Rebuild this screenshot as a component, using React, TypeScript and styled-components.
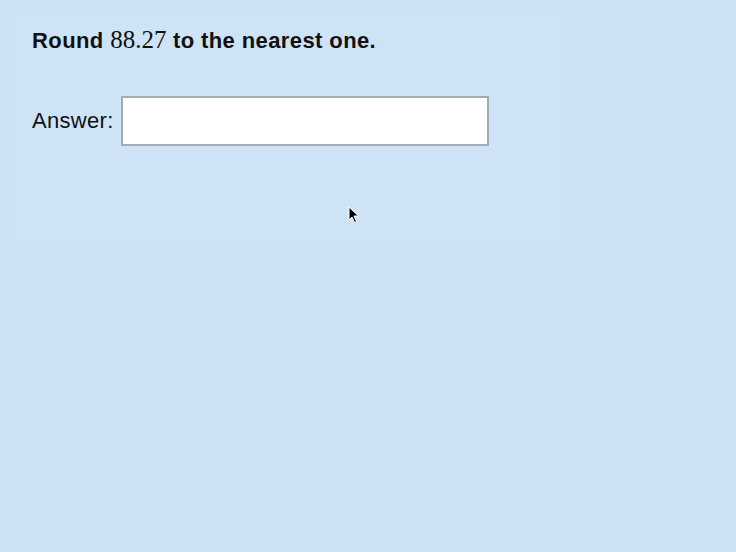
import styled, { createGlobalStyle } from "styled-components";

const Global = createGlobalStyle`
  html, body {
    margin: 0;
    padding: 0;
    background: #cee2f6;
  }
  body {
    font-family: "Liberation Sans", Arial, sans-serif;
    color: #111;
  }
`;

const Page = styled.div`
  position: relative;
  width: 736px;
  height: 552px;
  padding: 16px;
  box-sizing: border-box;
`;

const Panel = styled.div`
  width: 544px;
  height: 224px;
  padding: 12px 16px;
  box-sizing: border-box;
  background: #cfe3f6;
`;

const Question = styled.p`
  margin: 0;
  font-size: 22px;
  font-weight: bold;
  line-height: 24px;
  letter-spacing: 0.4px;
`;

const MathNum = styled.span`
  font-family: "Liberation Serif", "Times New Roman", serif;
  font-weight: normal;
  font-size: 25px;
  letter-spacing: 0;
`;

const Row = styled.div`
  display: flex;
  align-items: center;
  gap: 7px;
  margin-top: 43px;
`;

const Label = styled.label`
  font-size: 22px;
  letter-spacing: 0.3px;
`;

const AnswerInput = styled.input`
  width: 368px;
  height: 50px;
  box-sizing: border-box;
  border: 2px solid #a2acb5;
  background: #fff;
  font-size: 20px;
  padding: 0 8px;
  outline: none;
`;

const Cursor = styled.svg`
  position: absolute;
  left: 348px;
  top: 206px;
`;

export default function App() {
  return (
    <>
      <Global />
      <Page>
        <Panel>
          <Question>
            Round <MathNum>88.27</MathNum> to the nearest one.
          </Question>
          <Row>
            <Label htmlFor="ans">Answer:</Label>
            <AnswerInput id="ans" type="text" />
          </Row>
        </Panel>
        <Cursor width="12" height="18" viewBox="0 0 12 18">
          <path d="M1 1 L1 14 L4 11 L6.5 16.5 L8.5 15.5 L6 10 L10.5 10 Z" fill="#000" stroke="#fff" strokeWidth="1" />
        </Cursor>
      </Page>
    </>
  );
}
